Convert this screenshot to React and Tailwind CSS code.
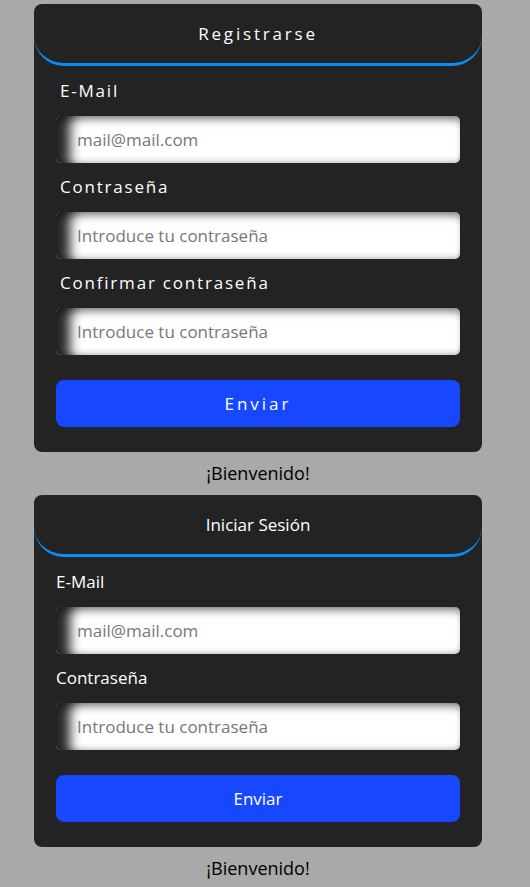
import React from "react";

const inputCls =
  "w-full h-[47px] rounded-[5px] bg-white px-[21px] text-[17px] text-[#333] placeholder:text-[#777] outline-none shadow-[inset_22px_4px_12px_-8px_rgba(0,0,0,0.85),inset_0_8px_8px_-4px_rgba(0,0,0,0.35),inset_0_-4px_6px_-3px_rgba(0,0,0,0.3)]";

function Field({ label, placeholder, type = "text", spaced }) {
  return (
    <div className="flex flex-col">
      <label
        className={
          spaced
            ? "px-[4px] text-[17px] leading-[24px] tracking-[1.8px] text-white"
            : "text-[17px] leading-[24px] text-white"
        }
      >
        {label}
      </label>
      <input type={type} placeholder={placeholder} className={"mt-[13px] " + inputCls} />
    </div>
  );
}

function Card({ title, spaced, fields }) {
  return (
    <div className="w-[448px] rounded-[8px] bg-[#232323] pb-[25px]">
      <div className="flex h-[62px] items-center justify-center rounded-b-[30px] border-b-[3px] border-[#0a8cf5]">
        <h2
          className={
            spaced
              ? "text-[17px] tracking-[2.8px] text-white"
              : "text-[17px] text-white"
          }
        >
          {title}
        </h2>
      </div>
      <form className="flex flex-col gap-[12px] px-[22px] pt-[13px]" onSubmit={(e) => e.preventDefault()}>
        {fields.map((f) => (
          <Field key={f.label} {...f} spaced={spaced} />
        ))}
        <button
          type="submit"
          className={
            "mt-[13px] h-[47px] w-full rounded-[8px] bg-[#1747ff] text-[17px] text-white " +
            (spaced ? "tracking-[3px]" : "")
          }
        >
          Enviar
        </button>
      </form>
    </div>
  );
}

export default function App() {
  return (
    <div className="min-h-screen bg-[#a9a9a9]" style={{ fontFamily: '"Open Sans", "Noto Sans", sans-serif' }}>
      <div className="flex w-[516px] flex-col items-center pt-[4px]">
        <Card
          title="Registrarse"
          spaced
          fields={[
            { label: "E-Mail", placeholder: "mail@mail.com", type: "email" },
            { label: "Contraseña", placeholder: "Introduce tu contraseña", type: "password" },
            { label: "Confirmar contraseña", placeholder: "Introduce tu contraseña", type: "password" },
          ]}
        />
        <p className="my-[9px] text-[18px] leading-[25px] text-black">¡Bienvenido!</p>
        <Card
          title="Iniciar Sesión"
          fields={[
            { label: "E-Mail", placeholder: "mail@mail.com", type: "email" },
            { label: "Contraseña", placeholder: "Introduce tu contraseña", type: "password" },
          ]}
        />
        <p className="my-[9px] text-[18px] leading-[25px] text-black">¡Bienvenido!</p>
      </div>
    </div>
  );
}
